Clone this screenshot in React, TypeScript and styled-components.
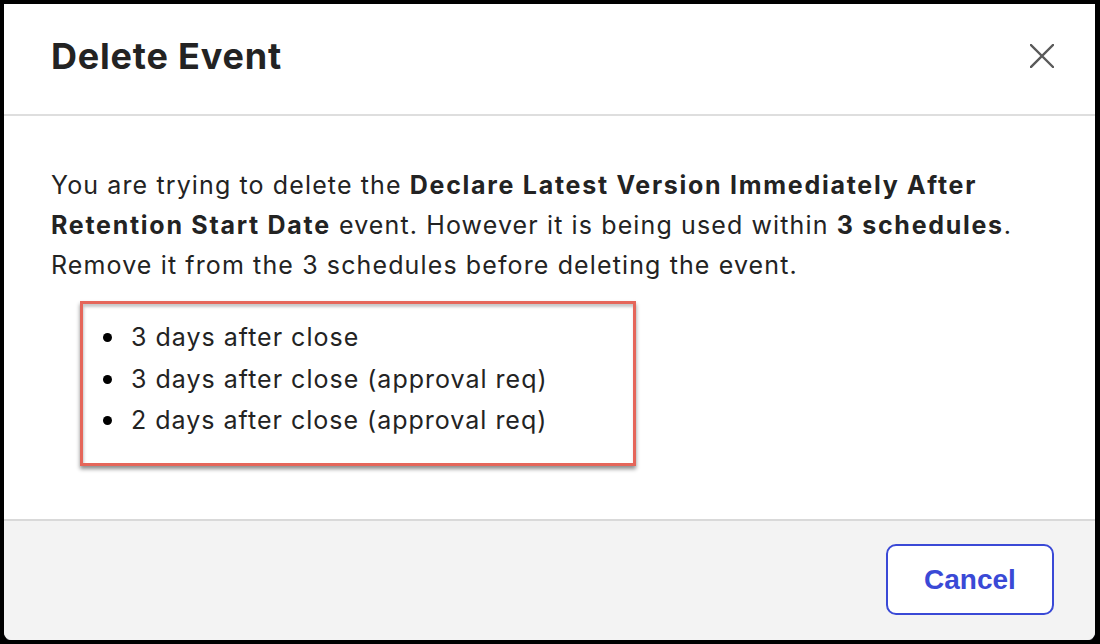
import styled, { createGlobalStyle } from 'styled-components';

const GlobalStyle = createGlobalStyle`
  html, body {
    margin: 0;
    padding: 0;
    background: #000000;
  }
  body {
    font-family: Inter, "Noto Sans", "Liberation Sans", sans-serif;
    font-optical-sizing: none;
    font-variation-settings: 'opsz' 14;
    color: #232323;
  }
`;

const schedules = [
  '3 days after close',
  '3 days after close (approval req)',
  '2 days after close (approval req)',
];

const CloseIcon = () => (
  <svg width='24' height='24' viewBox='0 0 24 24' fill='none'>
    <path
      d='M1 1 L23 23 M23 1 L1 23'
      stroke='#5a5a5a'
      strokeWidth='2.4'
      strokeLinecap='square'
    />
  </svg>
);

const App = () => {
  return (
    <>
      <GlobalStyle />
      <Dialog>
        <Header>
          <Title>Delete Event</Title>
          <CloseButton aria-label='Close'>
            <CloseIcon />
          </CloseButton>
        </Header>
        <Body>
          <Message>
            You are trying to delete the{' '}
            <b>Declare Latest Version Immediately After Retention Start Date</b>{' '}
            event. However it is being used within <b>3 schedules</b>. Remove it
            from the 3 schedules before deleting the event.
          </Message>
          <ScheduleList>
            {schedules.map((item, i) => (
              <ScheduleItem key={i}>{item}</ScheduleItem>
            ))}
          </ScheduleList>
        </Body>
        <Footer>
          <CancelButton>Cancel</CancelButton>
        </Footer>
      </Dialog>
    </>
  );
};

const Dialog = styled.div`
  box-sizing: border-box;
  margin: 4px 5px 0 4px;
  height: 636px;
  background: #ffffff;
  border-radius: 0 0 8px 8px;
  box-shadow: 0 1px 0 #5b5b60;
  display: flex;
  flex-direction: column;
  overflow: hidden;
`;

const Header = styled.div`
  box-sizing: border-box;
  height: 112px;
  padding: 0 41px 0 47px;
  display: flex;
  align-items: center;
  justify-content: space-between;
  border-bottom: 2px solid #dedede;
`;

const Title = styled.h1`
  margin: 0 0 6px 0;
  font-size: 36px;
  font-weight: 700;
  letter-spacing: 0.8px;
  color: #232323;
`;

const CloseButton = styled.button`
  border: none;
  background: transparent;
  padding: 0;
  width: 24px;
  height: 24px;
  margin-bottom: 6px;
  display: flex;
  cursor: pointer;
`;

const Body = styled.div`
  flex: 1;
  padding: 49px 40px 0 47px;
`;

const Message = styled.p`
  margin: 0;
  font-size: 25px;
  line-height: 40px;
  letter-spacing: 1.12px;
  color: #232323;

  b {
    font-weight: 700;
    letter-spacing: 1.72px;
  }
`;

const ScheduleList = styled.ul`
  box-sizing: border-box;
  width: 556px;
  height: 165px;
  margin: 16px 0 0 29px;
  padding: 13px 0 0 20px;
  list-style: none;
  border: 3px solid #e5665a;
  box-shadow: 0 3px 4px rgba(0, 0, 0, 0.45), inset 1px 3px 3px rgba(0, 0, 0, 0.22);
`;

const ScheduleItem = styled.li`
  display: flex;
  align-items: center;
  font-size: 25px;
  line-height: 41.5px;
  letter-spacing: 1px;
  color: #232323;

  &::before {
    content: '';
    flex: none;
    width: 9px;
    height: 9px;
    border-radius: 50%;
    background: #000000;
    margin-right: 19px;
  }
`;

const Footer = styled.div`
  box-sizing: border-box;
  height: 121px;
  border-top: 2px solid #d9d9d9;
  background: #f3f3f3;
  display: flex;
  align-items: center;
  justify-content: flex-end;
  padding: 0 41px 0 0;
`;

const CancelButton = styled.button`
  box-sizing: border-box;
  width: 168px;
  height: 71px;
  margin-bottom: 2px;
  border: 2px solid #3a49d6;
  border-radius: 10px;
  background: #ffffff;
  color: #3a49d6;
  font-family: "Liberation Sans", Arial, sans-serif;
  font-size: 28px;
  font-weight: 700;
  cursor: pointer;
`;

export default App;
